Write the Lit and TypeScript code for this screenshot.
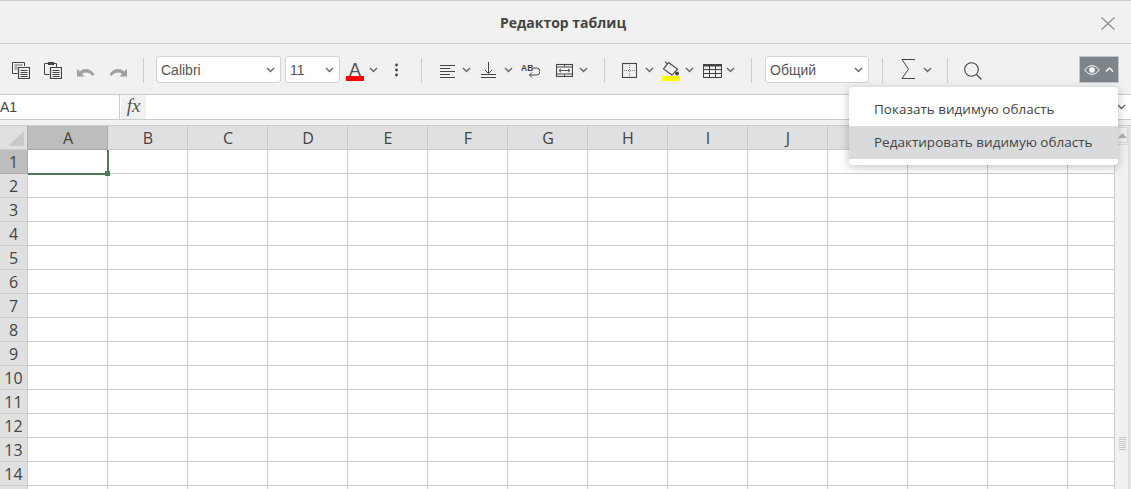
import { LitElement, html, css, svg } from "lit";
import { customElement } from "lit/decorators.js";

const chev = html`<svg class="chev" width="9" height="6" viewBox="0 0 9 6"><path d="M1 1l3.5 3.500L8 1" fill="none" stroke="#666" stroke-width="1.400"/></svg>`;
const ic = (w: number, h: number, body: unknown) =>
  html`<svg width=${w} height=${h} viewBox="0 0 ${w} ${h}" fill="none" stroke="#444" stroke-width="1">${body}</svg>`;

const copy = ic(18, 18, svg`<g transform="translate(0 1)"><path d="M12.500 4V.5H.5v11h5"/><path d="M2.500 3h8M2.500 5h3M2.500 7h3" stroke="#666"/><path d="M6.500 5.500h11v11h-11z" stroke-width="1.200"/><path d="M8.500 8.500h7M8.500 10.500h7M8.500 12.500h7M8.500 14.500h7"/></g>`);
const paste = ic(18, 18, svg`<g transform="translate(0 1)"><path d="M5.500 12.500h-5V1.500h12v3.500"/><rect x="4" y="0" width="6" height="3" fill="#444" stroke="none"/><path d="M6.500 5.500h11v11h-11z" stroke-width="1.200"/><path d="M8.500 8.500h7M8.500 10.500h7M8.500 12.500h7M8.500 14.500h7"/></g>`);
const undo = ic(18, 18, svg`<path transform="translate(0 7)" d="M0 1v7.500h7.500L5 6C8 3.800 12 4 15.500 8L17.500 6.500C13.500 .5 7.500 -.5 3 3.500z" fill="#a0a0a0" stroke="none"/>`);
const redo = ic(18, 18, svg`<path transform="translate(0 7)" d="M18 1v7.500h-7.500L13 6C10 3.800 6 4 2.500 8L.5 6.500C4.500 .5 10.500 -.5 15 3.500z" fill="#a0a0a0" stroke="none"/>`);
const fontA = html`<span class="col"><span class="a-letter">A</span><span class="bar red"></span></span>`;
const dots = html`<svg width="3" height="14" viewBox="0 0 3 14"><circle cx="1.500" cy="2" r="1.400" fill="#444"/><circle cx="1.500" cy="7" r="1.400" fill="#444"/><circle cx="1.500" cy="12" r="1.400" fill="#444"/></svg>`;
const alignL = ic(15, 14, svg`<path d="M0 1.500h15M0 4.500h10M0 7.500h15M0 10.500h10M0 13.500h15"/>`);
const vAlign = ic(16, 16, svg`<path d="M7.500 0v11M4 8l3.500 3.500L11 8"/><path d="M0 12.500h15M0 15.500h15" stroke-width="1.100"/>`);
const wrap = html`<span class="wrapi"><span class="ab">AB</span><svg width="19" height="16" viewBox="0 0 19 16" fill="none" stroke="#444" stroke-width="1"><path d="M12 5h3.500a3.500 3.500 0 0 1 0 7H8.500M11 9.500L8.500 12l2.500 2.500"/></svg></span>`;
const merge = ic(17, 14, svg`<g transform="translate(0 1)"><rect x=".5" y=".5" width="16" height="12" stroke-width="1.100"/><path d="M0 3h17M0 10h17"/><path d="M3 6.500h11M5 4.800L3 6.500l2 1.700M12 4.800l2 1.700-2 1.700M8.500 .5v2M8.500 10.500v2" stroke-width=".9"/></g>`);
const borders = ic(15, 16, svg`<g transform="translate(0 1)"><rect x=".5" y=".5" width="14" height="14" stroke-width="1.100"/><path d="M7.500 2v12M2 7.500h12" stroke="#888" stroke-dasharray="1 1"/></g>`);
const fill = html`<span class="col"><svg width="18" height="15" viewBox="0 0 18 15" fill="none" stroke="#444" stroke-width="1.100"><path d="M6.500 1.500L15.500 8 10 14 1.500 8z"/><path d="M5.500 3.500L3 .5"/><circle cx="15" cy="12.500" r="2" fill="#444" stroke="none"/></svg><span class="bar yellow"></span></span>`;
const table = ic(19, 14, svg`<rect x=".5" y=".5" width="18" height="13" stroke-width="1.100"/><path d="M0 1.500h19" stroke-width="2"/><path d="M0 5.500h19M0 9.500h19M6.500 1v12M12.500 1v12"/>`);
const sum = ic(15, 20, svg`<path d="M14 .5H1l6.500 9.500L1 19.500h13" stroke-width="1"/>`);
const search = ic(18, 18, svg`<circle cx="7.500" cy="7.500" r="6.800" stroke-width="1.100"/><path d="M12.500 12.500L17.500 17.500" stroke-width="1.200"/>`);
const closeX = html`<svg width="14" height="13" viewBox="0 0 14 13" fill="none" stroke="#8a8a8a" stroke-width="1.100"><path d="M.5 .5l13 12M13.500 .5l-13 12"/></svg>`;

const columns = ["A", "B", "C", "D", "E", "F", "G", "H", "I", "J", "", "", "", ""];
const rows = Array.from({ length: 15 }, (_, i) => i + 1);

@customElement("app-root")
export class AppRoot extends LitElement {
  static styles = css`
    :host { display: block; width: 1131px; height: 489px; overflow: hidden; position: relative; background: #fff; font-family: "Open Sans", sans-serif; color: #444; }
    svg { display: block; }
    .title { height: 44px; box-sizing: border-box; border-top: 1px solid #ccc; border-bottom: 1px solid #ccc; background: #f1f1f1; display: flex; align-items: center; justify-content: center; padding-right: 5px; font-size: 14px; font-weight: 700; color: #444; position: relative; }
    .close { position: absolute; right: 16px; top: 16px; }
    .toolbar { height: 51px; box-sizing: border-box; border-bottom: 1px solid #ccc; background: #f1f1f1; display: flex; align-items: center; padding: 2px 0 0 12px; }
    .toolbar > * { flex: none; }
    .sep { width: 1px; height: 25px; background: #ccc; margin-top: 1px; }
    .sel { height: 27px; margin-top: -1px; box-sizing: border-box; border: 1px solid #d4d4d4; border-radius: 3px; background: #fff; display: flex; align-items: center; justify-content: space-between; padding: 0 5px 0 4px; font: 14px "Liberation Sans", sans-serif; color: #555; }
    .col { display: flex; flex-direction: column; align-items: center; margin-top: 2px; }
    .a-letter { font: 18px/18px "Liberation Sans", sans-serif; color: #555; height: 15px; }
    .bar { display: block; height: 5px; width: 18px; }
    .red { background: #f00; }
    .yellow { background: #ff0; }
    .wrapi { position: relative; width: 19px; height: 15px; display: block; }
    .wrapi svg { position: absolute; left: 0; top: 0; }
    .ab { position: absolute; left: 0; top: 1px; font: 700 8.5px/8px "Liberation Sans", sans-serif; color: #444; }
    .eye { width: 40px; height: 27px; margin-top: -1px; background: #7d848a; display: flex; align-items: center; justify-content: center; gap: 5px; border: 1px solid #c4c7ca; box-sizing: border-box; }
    .dn { margin-top: 2px; } .up { margin-top: -2px; }
    .m4 { margin-left: 4px; } .m5 { margin-left: 5px; } .m6 { margin-left: 6px; } .m7 { margin-left: 7px; } .m8 { margin-left: 8px; } .m9 { margin-left: 9px; } .m10 { margin-left: 10px; } .m12 { margin-left: 12px; } .m13 { margin-left: 13px; } .m14 { margin-left: 14px; } .m15 { margin-left: 15px; } .m16 { margin-left: 16px; } .m17 { margin-left: 17px; } .m18 { margin-left: 18px; } .m23 { margin-left: 23px; } .m97 { margin-left: 97px; }
    .w125 { width: 125px; } .w55 { width: 55px; } .w104 { width: 104px; }
    .formula { height: 25px; box-sizing: border-box; border-bottom: 1px solid #ccc; background: #fff; display: flex; align-items: stretch; }
    .name { width: 119px; border-right: 1px solid #ccc; padding-top: 1px; font: 14px/23px "Liberation Sans", sans-serif; color: #444; }
    .fx { width: 25px; margin-left: 1px; background: #f1f1f1; font: italic 19px/22px "Liberation Serif", serif; color: #555; text-align: center; }
    .input { flex: 1; display: flex; align-items: center; justify-content: flex-end; padding-right: 5px; }
    .gap { height: 5px; background: #f1f1f1; }
    .sheet { display: flex; height: 364px; background: #f1f1f1; border-top: 1px solid #ccc; }
    .grid { width: 1114px; flex: none; overflow: hidden; display: grid; grid-template-columns: 28px repeat(14, 80px); grid-auto-rows: 24px; background: #fff; position: relative; }
    .cell { box-sizing: border-box; border-right: 1px solid #ccc; border-bottom: 1px solid #ccc; }
    .hd { background: #e0e0e0; display: flex; align-items: center; justify-content: center; font-size: 16px; color: #444; }
    .colhd { padding-left: 1px; }
    .hd.on { background: #bdbdbd; border-color: #a8a8a8; }
    .corner { background: #e0e0e0; position: relative; border-right-color: #a8a8a8; }
    .corner svg { position: absolute; left: 8px; top: 5px; }
    .cur { position: relative; }
    .range { position: absolute; z-index: 1; left: 0; top: 0; right: -2px; bottom: -2px; box-sizing: border-box; border-right: 2px solid #4a7a5a; border-bottom: 2px solid #4a7a5a; }
    .handle { position: absolute; right: -3px; bottom: -3px; width: 5px; height: 5px; background: #4a7a5a; }
    .scroll { flex: 1; display: flex; }
    .track { border-left: 1px solid #ccc; border-right: 1px solid #dcdcdc; position: relative; box-sizing: border-box; width: 15px; flex: none; }
    .btn { position: absolute; left: 1px; right: 0; top: 1px; height: 16px; box-sizing: border-box; border: 1px solid #d8d8d8; display: flex; align-items: center; justify-content: center; }
    .thumb { position: absolute; left: 1px; right: 0; top: 18px; bottom: 0; border-top: 1px solid #d8d8d8; }
    .strip { flex: 1; background: #e6e6e6; }
    .grip { position: absolute; left: 4px; top: 311px; width: 7px; height: 13px; background: repeating-linear-gradient(#c8c8c8 0 1px, transparent 1px 2px); }
    .menu { position: absolute; left: 849px; top: 87px; width: 269px; height: 78px; box-sizing: border-box; padding: 6px 0; background: #fff; border-radius: 4px; box-shadow: 0 2px 10px rgba(0,0,0,.25); font-size: 13.5px; color: #444; }
    .item { height: 33px; box-sizing: border-box; padding: 0 0 2px 25px; display: flex; align-items: center; white-space: nowrap; }
    .item.hl { background: #d8dadc; }
  `;

  render() {
    return html`
      <div class="title">Редактор таблиц<span class="close">${closeX}</span></div>
      <div class="toolbar">
        ${copy}<span class="m14">${paste}</span><span class="m15">${undo}</span><span class="m14">${redo}</span>
        <span class="sep m16"></span>
        <div class="sel w125 m12">Calibri ${chev}</div>
        <div class="sel w55 m4">11 ${chev}</div>
        <span class="m6">${fontA}</span><span class="m5">${chev}</span><span class="m17">${dots}</span>
        <span class="sep m23"></span>
        <span class="m18 dn">${alignL}</span><span class="m7">${chev}</span><span class="m10">${vAlign}</span><span class="m7">${chev}</span>
        <span class="m8">${wrap}</span><span class="m16">${merge}</span><span class="m6">${chev}</span>
        <span class="sep m16"></span>
        <span class="m17">${borders}</span><span class="m8">${chev}</span><span class="m8">${fill}</span><span class="m5">${chev}</span><span class="m9 dn">${table}</span><span class="m4">${chev}</span>
        <span class="sep m16"></span>
        <div class="sel w104 m13">Общий ${chev}</div>
        <span class="sep m13"></span>
        <span class="m18 up">${sum}</span><span class="m7">${chev}</span>
        <span class="sep m15"></span>
        <span class="m16 dn">${search}</span>
        <div class="eye m97">
          <svg width="16" height="10" viewBox="0 0 16 10" fill="none" stroke="#fff" stroke-width="1"><path d="M.8 5C3 2 5.300 .7 8 .7S13 2 15.200 5C13 8 10.700 9.300 8 9.300S3 8 .8 5z"/><circle cx="8" cy="5" r="2.800" fill="#fff" stroke="none"/></svg>
          <svg width="9" height="6" viewBox="0 0 9 6"><path d="M1 4.500L4.500 1 8 4.500" fill="none" stroke="#fff" stroke-width="1.300"/></svg>
        </div>
      </div>
      <div class="formula">
        <div class="name">A1</div>
        <div class="fx">fx</div>
        <div class="input">${chev}</div>
      </div>
      <div class="gap"></div>
      <div class="sheet">
        <div class="grid">
          <div class="cell corner"><svg width="16" height="15" viewBox="0 0 16 15"><path d="M16 0v15H0z" fill="#c9c9c9"/></svg></div>
          ${columns.map((c, i) => html`<div class="cell hd colhd ${i === 0 ? "on" : ""}">${c}</div>`)}
          ${rows.map((r) => html`
            <div class="cell hd ${r === 1 ? "on" : ""}">${r < 15 ? r : ""}</div>
            ${columns.map((_, i) => html`<div class="cell ${r === 1 && i === 0 ? "cur" : ""}">${r === 1 && i === 0 ? html`<span class="range"><span class="handle"></span></span>` : ""}</div>`)}
          `)}
        </div>
        <div class="scroll">
          <div class="track">
            <div class="btn"><svg width="9" height="5" viewBox="0 0 9 5"><path d="M4.500 0L9 5H0z" fill="#b0b0b0"/></svg></div>
            <div class="thumb"></div>
            <span class="grip"></span>
          </div>
          <div class="strip"></div>
        </div>
      </div>
      <div class="menu">
        <div class="item">Показать видимую область</div>
        <div class="item hl">Редактировать видимую область</div>
      </div>
    `;
  }
}
